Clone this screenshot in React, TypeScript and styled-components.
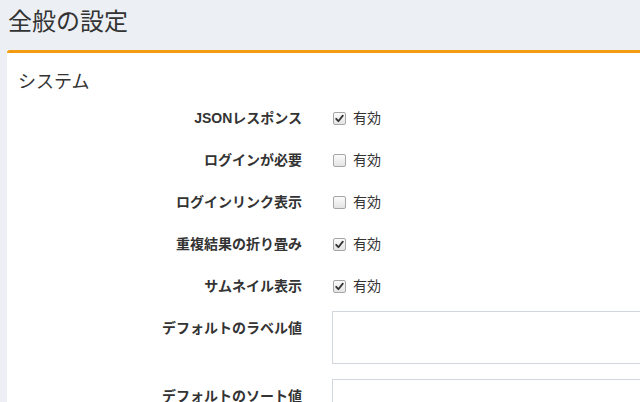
import React from 'react';
import styled, {createGlobalStyle} from "styled-components";

const GlobalStyle = createGlobalStyle`
    html, body {
        margin: 0;
        padding: 0;
        background: #ecf0f5;
        overflow: hidden;
    }
    body {
        font-family: "Liberation Sans", "Noto Sans CJK JP", sans-serif;
        color: #333;
        font-size: 14px;
    }
`

const Page = styled.div`
    width: 760px;
    padding: 0 0 0 7px;
`

const ContentHeader = styled.div`
    padding: 9px 1px 15px;

    h1 {
        margin: 0;
        font-size: 24px;
        font-weight: normal;
        line-height: 1.1;
    }
`

const Box = styled.div`
    background: #fff;
    border-top: 3px solid #f39c12;
    border-radius: 3px;
    min-height: 400px;
`

const BoxHeader = styled.div`
    padding: 19px 11px 9px;

    h3 {
        margin: 0;
        font-size: 18px;
        font-weight: normal;
        line-height: 20px;
    }
`

const Form = styled.div`
    display: flex;
    flex-direction: column;
    gap: 15px;
`

const Row = styled.div`
    display: grid;
    grid-template-columns: 310px 1fr;
    min-height: 27px;
`

const Label = styled.label`
    text-align: right;
    padding: 7px 15px 0;
    font-weight: bold;
    line-height: 20px;
    white-space: nowrap;
`

const Control = styled.div`
    padding: 0 15px;
`

const CheckLine = styled.label`
    display: flex;
    align-items: center;
    gap: 7px;
    padding-top: 7px;
    line-height: 20px;
    padding-left: 1px;
`

const Box13 = styled.span`
    width: 11px;
    height: 11px;
    border: 1px solid #a6a6a6;
    border-radius: 2px;
    background: linear-gradient(#fbfbfb, #e4e4e4);
    display: flex;
    align-items: center;
    justify-content: center;
`

const TextArea = styled.div`
    height: 51px;
    border: 1px solid #d2d6de;
    margin-left: 0;
`

const Check: React.FC<{checked: boolean}> = ({checked}) => (
    <Box13>
        {checked && (
            <svg width="9" height="9" viewBox="0 0 9 9">
                <path d="M1.2 4.8 L3.4 7.2 L7.8 1.6" stroke="#333" strokeWidth="1.8" fill="none" strokeLinecap="round" strokeLinejoin="round"/>
            </svg>
        )}
    </Box13>
)

const SETTINGS = [
    {label: 'JSONレスポンス', checked: true},
    {label: 'ログインが必要', checked: false},
    {label: 'ログインリンク表示', checked: false},
    {label: '重複結果の折り畳み', checked: true},
    {label: 'サムネイル表示', checked: true},
]

const App: React.FC = () => {
    return (
        <>
            <GlobalStyle/>
            <Page>
                <ContentHeader>
                    <h1>全般の設定</h1>
                </ContentHeader>
                <Box>
                    <BoxHeader>
                        <h3>システム</h3>
                    </BoxHeader>
                    <Form>
                        {SETTINGS.map(s => (
                            <Row key={s.label}>
                                <Label>{s.label}</Label>
                                <Control>
                                    <CheckLine>
                                        <Check checked={s.checked}/>
                                        有効
                                    </CheckLine>
                                </Control>
                            </Row>
                        ))}
                        <Row>
                            <Label>デフォルトのラベル値</Label>
                            <Control><TextArea/></Control>
                        </Row>
                        <Row>
                            <Label>デフォルトのソート値</Label>
                            <Control><TextArea/></Control>
                        </Row>
                    </Form>
                </Box>
            </Page>
        </>
    )
};

export default App;
